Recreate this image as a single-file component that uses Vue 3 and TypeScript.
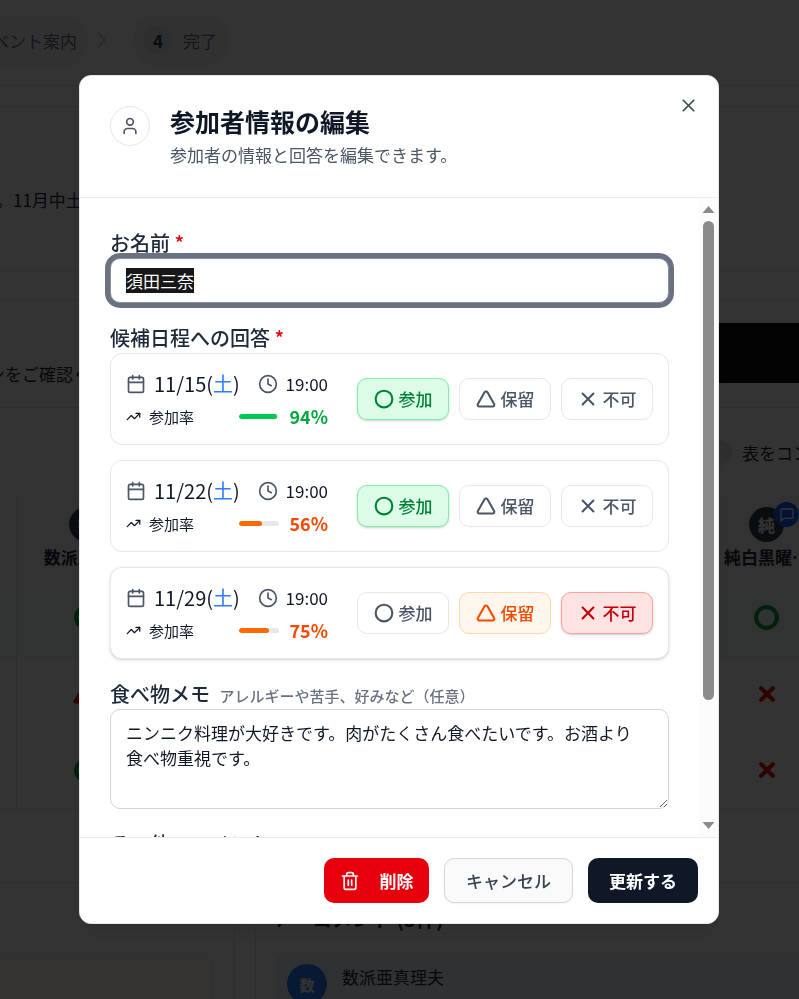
<script setup lang="ts">
import { computed, onMounted, ref } from 'vue'

type Answer = 'yes' | 'maybe' | 'no'

interface Candidate {
  id: string
  date: string
  day: string
  time: string
  rate: number
  selected: Answer[]
  raised: boolean
}

const options: { value: Answer; label: string }[] = [
  { value: 'yes', label: '参加' },
  { value: 'maybe', label: '保留' },
  { value: 'no', label: '不可' },
]

const name = ref('須田三奈')
const foodMemo = ref('ニンニク料理が大好きです。肉がたくさん食べたいです。お酒より食べ物重視です。')
const comment = ref('')

const candidates = ref<Candidate[]>([
  { id: 'c1', date: '11/15', day: '土', time: '19:00', rate: 94, selected: ['yes'], raised: false },
  { id: 'c2', date: '11/22', day: '土', time: '19:00', rate: 56, selected: ['yes'], raised: false },
  { id: 'c3', date: '11/29', day: '土', time: '19:00', rate: 75, selected: ['maybe', 'no'], raised: true },
])

function choose(candidate: Candidate, value: Answer) {
  candidate.selected = [value]
}

const open = ref(true)
const nameInput = ref<HTMLInputElement | null>(null)
const scroller = ref<HTMLElement | null>(null)
const scrollTop = ref(0)
const viewHeight = ref(1)
const fullHeight = ref(1)

const thumbStyle = computed(() => ({
  height: `${(viewHeight.value / fullHeight.value) * 100}%`,
  top: `${(scrollTop.value / fullHeight.value) * 100}%`,
}))

function measure() {
  const el = scroller.value
  if (!el) return
  scrollTop.value = el.scrollTop
  viewHeight.value = el.clientHeight
  fullHeight.value = el.scrollHeight
}

onMounted(() => {
  nameInput.value?.focus({ preventScroll: true })
  nameInput.value?.select()
  measure()
  window.addEventListener('resize', measure)
})
</script>

<template>
  <div class="page" aria-hidden="true">
    <div class="steps">
      <span class="step step-cut">ベント案内</span>
      <svg class="chevron" viewBox="0 0 24 24"><path d="m9 5 7 7-7 7" /></svg>
      <span class="step"><b class="step-no">4</b>完了</span>
    </div>

    <div class="panel intro"><p>。11月中土</p></div>

    <div class="panel notice">
      <p>ンをご確認ください</p>
      <div class="black-btn"></div>
    </div>

    <div class="panel answers">
      <div class="toolbar"><span class="switch"></span>表をコンパクト</div>
      <table class="grid">
        <thead>
          <tr>
            <th class="c-edge"></th>
            <th class="c-first">
              <span class="avatar">数</span>
              <span class="who">数派亜真…</span>
            </th>
            <th></th>
            <th class="c-last">
              <span class="avatar">純
                <span class="badge">
                  <svg viewBox="0 0 24 24"><path d="M21 15a2 2 0 0 1-2 2H7l-4 4V5a2 2 0 0 1 2-2h14a2 2 0 0 1 2 2z" /></svg>
                </span>
              </span>
              <span class="who">純白黒曜…</span>
            </th>
          </tr>
        </thead>
        <tbody>
          <tr class="best">
            <td></td>
            <td><svg class="mark ok" viewBox="0 0 24 24"><circle cx="12" cy="12" r="10" /></svg></td>
            <td></td>
            <td><svg class="mark ok" viewBox="0 0 24 24"><circle cx="12" cy="12" r="10" /></svg></td>
          </tr>
          <tr>
            <td></td>
            <td><svg class="mark ng" viewBox="0 0 24 24"><path d="M12 2-1 21h26z" /></svg></td>
            <td></td>
            <td><svg class="mark ng" viewBox="0 0 24 24"><path d="M5 5l14 14M19 5 5 19" /></svg></td>
          </tr>
          <tr>
            <td></td>
            <td><svg class="mark ok" viewBox="0 0 24 24"><circle cx="12" cy="12" r="10" /></svg></td>
            <td></td>
            <td><svg class="mark ng" viewBox="0 0 24 24"><path d="M5 5l14 14M19 5 5 19" /></svg></td>
          </tr>
        </tbody>
      </table>
    </div>

    <div class="bottom">
      <div class="bottom-left"><div class="food-box"></div></div>
      <div class="bottom-right">
        <p class="comments-title">
          <svg viewBox="0 0 24 24"><path d="M21 15a2 2 0 0 1-2 2H7l-4 4V5a2 2 0 0 1 2-2h14a2 2 0 0 1 2 2z" /></svg>
          コメント (3件)
        </p>
        <div class="comment-box">
          <span class="comment-avatar">数</span>
          <span>数派亜真理夫</span>
        </div>
      </div>
    </div>
  </div>

  <div v-if="open" class="overlay">
    <form class="dialog" role="dialog" aria-modal="true" aria-labelledby="dialog-title" @submit.prevent="open = false">
      <header class="dialog-head">
        <span class="head-icon">
          <svg viewBox="0 0 24 24"><circle cx="12" cy="7" r="4" /><path d="M19 21v-2a4 4 0 0 0-4-4H9a4 4 0 0 0-4 4v2" /></svg>
        </span>
        <div class="head-text">
          <h2 id="dialog-title">参加者情報の編集</h2>
          <p>参加者の情報と回答を編集できます。</p>
        </div>
        <button type="button" class="close" aria-label="閉じる" @click="open = false">
          <svg viewBox="0 0 24 24"><path d="M18 6 6 18M6 6l12 12" /></svg>
        </button>
      </header>

      <div class="dialog-body">
        <div ref="scroller" class="scroller" @scroll="measure">
          <div class="field">
            <label class="label" for="name">お名前 <span class="req">*</span></label>
            <input id="name" ref="nameInput" v-model="name" class="text-input" type="text" autocomplete="off" />
          </div>

          <div class="field" role="group" aria-labelledby="answers-label">
            <span id="answers-label" class="label">候補日程への回答 <span class="req">*</span></span>
            <div class="cards">
              <div v-for="c in candidates" :key="c.id" class="card" :class="{ raised: c.raised }">
                <div class="info">
                  <div class="row when">
                    <span class="pair date">
                      <svg class="ico" viewBox="0 0 24 24"><path d="M8 2v4M16 2v4M3 10h18" /><rect x="3" y="4" width="18" height="18" rx="2" /></svg>
                      <span>{{ c.date }}(<span class="sat">{{ c.day }}</span>)</span>
                    </span>
                    <span class="pair time">
                      <svg class="ico" viewBox="0 0 24 24"><circle cx="12" cy="12" r="10" /><path d="M12 6v6l4 2" /></svg>
                      <span>{{ c.time }}</span>
                    </span>
                  </div>
                  <div class="row rate" :class="c.rate >= 80 ? 'high' : 'mid'">
                    <span class="pair rate-name">
                      <svg class="trend" viewBox="0 0 24 24"><path d="m22 7-8.5 8.5-5-5L2 17" /><path d="M16 7h6v6" /></svg>
                      <span>参加率</span>
                    </span>
                    <span class="meter">
                      <span class="bar"><span class="fill" :style="{ width: c.rate + '%' }"></span></span>
                      <strong>{{ c.rate }}%</strong>
                    </span>
                  </div>
                </div>
                <div class="choices">
                  <button
                    v-for="o in options"
                    :key="o.value"
                    type="button"
                    class="choice"
                    :class="[o.value, { on: c.selected.includes(o.value) }]"
                    :aria-pressed="c.selected.includes(o.value)"
                    @click="choose(c, o.value)"
                  >
                    <svg viewBox="0 0 24 24">
                      <circle v-if="o.value === 'yes'" cx="12" cy="12" r="10" />
                      <path v-else-if="o.value === 'maybe'" d="M13.73 4a2 2 0 0 0-3.46 0l-8 14A2 2 0 0 0 4 21h16a2 2 0 0 0 1.73-3Z" />
                      <path v-else d="M18.5 5.5l-13 13M5.5 5.5l13 13" />
                    </svg>
                    {{ o.label }}
                  </button>
                </div>
              </div>
            </div>
          </div>

          <div class="field">
            <label class="label" for="food">食べ物メモ <small>アレルギーや苦手、好みなど（任意）</small></label>
            <textarea id="food" v-model="foodMemo" class="text-area"></textarea>
          </div>

          <div class="field">
            <label class="label" for="comment">その他のコメント</label>
            <textarea id="comment" v-model="comment" class="text-area"></textarea>
          </div>
        </div>

        <div class="scrollbar" aria-hidden="true">
          <svg class="arrow" viewBox="0 0 12 7"><path d="M6 0l6 7H0z" /></svg>
          <div class="track"><span class="thumb" :style="thumbStyle"></span></div>
          <svg class="arrow" viewBox="0 0 12 7"><path d="M6 7l6-7H0z" /></svg>
        </div>
      </div>

      <footer class="dialog-foot">
        <button type="button" class="btn danger">
          <svg viewBox="0 0 24 24"><path d="M3 6h18M19 6v14a2 2 0 0 1-2 2H7a2 2 0 0 1-2-2V6M8 6V4a2 2 0 0 1 2-2h4a2 2 0 0 1 2 2v2M10 11v6M14 11v6" /></svg>
          削除
        </button>
        <button type="button" class="btn plain" @click="open = false">キャンセル</button>
        <button type="submit" class="btn primary">更新する</button>
      </footer>
    </form>
  </div>
</template>

<style>
body {
  overflow: hidden;
  font-family: "Noto Sans CJK JP", "Noto Sans", sans-serif;
}
</style>

<style scoped>
* {
  box-sizing: border-box;
}

p,
h2 {
  margin: 0;
}

button,
input,
textarea {
  font-family: inherit;
}

svg {
  flex: none;
  fill: none;
  stroke: currentColor;
  stroke-width: 2;
  stroke-linecap: round;
  stroke-linejoin: round;
}

/* Page behind the dialog */
.page {
  height: 100vh;
  overflow: hidden;
  background: #fdfdfd;
  color: #1e2939;
  font-size: 17px;
  line-height: 25px;
}

.steps {
  display: flex;
  align-items: center;
  height: 86px;
  padding-bottom: 5px;
  border-bottom: 1px solid #e5e7eb;
  color: #6a7282;
}

.step {
  display: flex;
  align-items: center;
  gap: 10px;
  height: 51px;
  padding: 0 12px 0 10px;
  border-radius: 25px;
  background: #f3f4f6;
  white-space: nowrap;
}

.step-cut {
  margin-left: -18px;
}

.step-no {
  display: grid;
  place-items: center;
  width: 30px;
  height: 30px;
  border-radius: 50%;
  background: #e5e7eb;
  color: #364153;
}

.chevron {
  width: 24px;
  height: 24px;
  margin-right: 20px;
  color: #d1d5dc;
}

.panel {
  border: solid #e5e7eb;
  border-width: 1px 0;
  background: #fff;
}

.intro {
  height: 165px;
  margin-top: 20px;
  padding: 80px 0 0;
}

.intro p {
  margin-left: -4px;
}

.notice {
  display: flex;
  align-items: center;
  justify-content: space-between;
  height: 108px;
  margin-top: 29px;
}

.notice p {
  margin: 38px 0 0 -12px;
}

.black-btn {
  width: 180px;
  height: 60px;
  margin-bottom: 2px;
  background: #101010;
}

.answers {
  height: 475px;
  border-top: 0;
}

.toolbar {
  display: flex;
  align-items: center;
  justify-content: flex-end;
  gap: 10px;
  height: 88px;
  margin-right: -62px;
}

.switch {
  width: 45px;
  height: 25px;
  border-radius: 13px;
  background: #e5e7eb;
}

.grid {
  width: calc(100% + 28px);
  table-layout: fixed;
  border-collapse: collapse;
}

.c-edge {
  width: 16px;
}

.c-first {
  width: 140px;
}

.c-last {
  width: 121px;
}

.grid th {
  height: 84px;
  padding: 0;
  background: #f9fafb;
}

.grid td {
  height: 76px;
  padding: 0;
  border-bottom: 1px solid #eef0f2;
  text-align: center;
}

.grid tr > :first-child {
  border-right: 1px solid #e5e7eb;
}

.best td {
  background: #f0fdf9;
}

.avatar {
  position: relative;
  display: grid;
  place-items: center;
  width: 35px;
  height: 35px;
  margin: 0 auto 2px;
  border-radius: 50%;
  background: #364153;
  color: #fff;
}

.badge {
  position: absolute;
  top: -5px;
  right: -15px;
  display: grid;
  place-items: center;
  width: 25px;
  height: 25px;
  border-radius: 50%;
  background: #155dfc;
}

.badge svg {
  width: 16px;
  height: 16px;
}

.who {
  display: block;
  text-align: center;
  white-space: nowrap;
}

.mark {
  display: block;
  margin: 0 auto;
  stroke-width: 4;
  overflow: visible;
}

.mark.ok {
  width: 25px;
  height: 25px;
  color: #00a63e;
}

.mark.ng {
  width: 20px;
  height: 20px;
  color: #e7180b;
  stroke-width: 5;
}

.bottom {
  display: flex;
  gap: 20px;
}

.bottom-left {
  width: 235px;
  height: 200px;
  padding: 70px 21px 0 0;
  border-right: 1px solid #e5e7eb;
}

.food-box {
  height: 130px;
  border: dashed #ffe0c0;
  border-width: 1px 1px 0 0;
  border-radius: 0 12px 0 0;
  background: #fffaf3;
}

.bottom-right {
  flex: 1;
  padding: 20px 0 0 20px;
  border-left: 1px solid #e5e7eb;
}

.comments-title {
  display: flex;
  align-items: center;
  gap: 14px;
  height: 30px;
  margin-bottom: 20px;
  font-size: 20px;
  font-weight: 700;
}

.comments-title svg {
  width: 22px;
  height: 22px;
}

.comment-box {
  display: flex;
  gap: 15px;
  height: 130px;
  padding: 10px;
  border: solid #dbeafe;
  border-width: 1px 0 0 1px;
  border-radius: 12px 0 0 0;
  background: #eff4fc;
}

.comment-avatar {
  display: grid;
  place-items: center;
  width: 40px;
  height: 40px;
  border-radius: 50%;
  background: #2b7fff;
  color: #fff;
  font-size: 15px;
  font-weight: 700;
}

/* Dialog */
.overlay {
  position: fixed;
  inset: 0;
  display: flex;
  align-items: center;
  justify-content: center;
  padding: 20px 21px 20px 20px;
  background: rgba(0, 0, 0, 0.8);
}

.dialog {
  display: flex;
  flex-direction: column;
  width: 100%;
  max-width: 640px;
  max-height: 85vh;
  overflow: hidden;
  border: 1px solid #e5e7eb;
  border-radius: 12px;
  background: #fff;
  box-shadow: 0 12px 19px -4px rgba(0, 0, 0, 0.1);
  color: #101828;
  font-size: 17px;
  line-height: 25px;
}

.dialog-head {
  display: flex;
  gap: 20px;
  padding: 30px;
  border-bottom: 1px solid #ececee;
}

.head-icon {
  display: grid;
  place-items: center;
  flex: none;
  width: 40px;
  height: 40px;
  border: 1px solid #e5e7eb;
  border-radius: 50%;
  color: #4a5565;
}

.head-icon svg {
  width: 20px;
  height: 20px;
}

.head-text {
  flex: 1;
}

.head-text h2 {
  margin-bottom: 6px;
  font-size: 25px;
  font-weight: 700;
  line-height: 30px;
}

.head-text p {
  color: #4a5565;
}

.close {
  display: grid;
  place-items: center;
  width: 30px;
  height: 30px;
  margin: -15px -15px 0 0;
  padding: 0;
  border: 0;
  background: none;
  color: #404b52;
}

.close svg {
  width: 21px;
  height: 21px;
}

.dialog-body {
  display: flex;
  flex: 1;
  min-height: 0;
}

.scroller {
  display: flex;
  flex: 1;
  flex-direction: column;
  gap: 20px;
  overflow-y: auto;
  padding: 30px;
  scrollbar-width: none;
}

.field {
  flex: none;
}

.label {
  display: block;
  color: #1e2939;
  font-size: 20px;
  font-weight: 500;
  line-height: 30px;
}

.label small {
  margin-left: 5px;
  color: #6a7282;
  font-size: 15px;
  line-height: 15px;
}

.req {
  color: #e7000b;
}

.text-input {
  display: block;
  width: 100%;
  height: 45px;
  padding: 0 15px;
  border: 1px solid #d1d5dc;
  border-radius: 10px;
  outline: none;
  color: #101828;
  font-size: 17px;
  line-height: 25px;
}

.text-input:focus {
  border-color: #8a919d;
  box-shadow: 0 0 0 5px #6a7282;
}

.text-input::selection {
  background: #171717;
  color: #fff;
}

.text-area {
  display: block;
  width: 100%;
  height: 100px;
  padding: 10px 20px 10px 15px;
  border: 1px solid #d1d5dc;
  border-radius: 10px;
  outline: none;
  color: #101828;
  font-size: 17px;
  line-height: 25px;
  resize: vertical;
}

.cards {
  display: grid;
  gap: 15px;
}

.card {
  display: flex;
  align-items: center;
  gap: 29px;
  padding: 15px;
  border: 1px solid #e5e7eb;
  border-radius: 12px;
  background: #fff;
}

.card.raised {
  box-shadow: 0 1px 4px rgba(0, 0, 0, 0.1), 0 1px 2px rgba(0, 0, 0, 0.1);
}

.info {
  display: grid;
  flex: 1;
  gap: 5px;
}

.row {
  display: flex;
  align-items: center;
  justify-content: space-between;
}

.pair {
  display: flex;
  align-items: center;
  gap: 8px;
}

.when {
  height: 30px;
}

.date {
  font-size: 20px;
}

.time {
  font-size: 17px;
}

.meter {
  font-size: 18px;
}

.ico {
  width: 20px;
  height: 20px;
  color: #4a5565;
}

.sat {
  color: #2b7fff;
}

.rate-name {
  font-size: 15px;
}

.trend {
  width: 15px;
  height: 15px;
}

.meter {
  display: flex;
  align-items: center;
  gap: 10px;
}

.bar {
  display: block;
  width: 40px;
  height: 5px;
  overflow: hidden;
  border-radius: 3px;
  background: #e5e7eb;
}

.fill {
  display: block;
  height: 100%;
  border-radius: 3px;
}

.high .fill {
  background: #00c950;
}

.high strong {
  color: #00a63e;
}

.mid .fill {
  background: #ff6900;
}

.mid strong {
  color: #f54900;
}

.choices {
  display: flex;
  gap: 10px;
}

.choice {
  display: flex;
  align-items: center;
  justify-content: center;
  gap: 5px;
  width: 92px;
  height: 42px;
  padding: 0;
  border: 1px solid #e5e7eb;
  border-radius: 10px;
  background: #fff;
  color: #4a5565;
  font-size: 17px;
  font-weight: 500;
  line-height: 25px;
}

.choice svg {
  width: 20px;
  height: 20px;
  stroke-width: 2.5;
}

.choice.on {
  box-shadow: 0 1px 3px rgba(0, 0, 0, 0.1), 0 1px 2px rgba(0, 0, 0, 0.1);
}

.choice.yes.on {
  border-color: #7bf1a8;
  background: #dcfce7;
  color: #008236;
}

.choice.maybe.on {
  border-color: #ffd6a7;
  background: #fff7ed;
  box-shadow: none;
  color: #f54900;
}

.choice.no.on {
  border-color: #ffa2a2;
  background: #ffe2e2;
  color: #c10007;
}

.scrollbar {
  display: flex;
  flex-direction: column;
  align-items: center;
  gap: 8px;
  width: 19px;
  padding: 8px 0;
  background: #fcfcfc;
}

.arrow {
  width: 13px;
  height: 7px;
  fill: #8b8b8b;
  stroke: none;
}

.track {
  position: relative;
  flex: 1;
  width: 11px;
}

.thumb {
  position: absolute;
  left: 0;
  width: 100%;
  border-radius: 6px;
  background: #8b8b8b;
}

.dialog-foot {
  display: flex;
  justify-content: flex-end;
  gap: 15px;
  padding: 20px;
  border-top: 1px solid #ececee;
}

.btn {
  display: flex;
  align-items: center;
  justify-content: center;
  height: 45px;
  padding: 0 15px;
  border: 0;
  border-radius: 10px;
  font-size: 17px;
  line-height: 25px;
}

.danger {
  gap: 20px;
  min-width: 105px;
  background: #e7000b;
  color: #fff;
  font-weight: 700;
}

.danger svg {
  width: 20px;
  height: 20px;
}

.plain {
  min-width: 129px;
  border: 1px solid #d4d6d8;
  background: #fafafa;
  box-shadow: 0 1px 2px rgba(0, 0, 0, 0.05);
  color: #364153;
  font-weight: 500;
}

.primary {
  min-width: 110px;
  background: #101828;
  color: #fff;
  font-weight: 700;
}
</style>
